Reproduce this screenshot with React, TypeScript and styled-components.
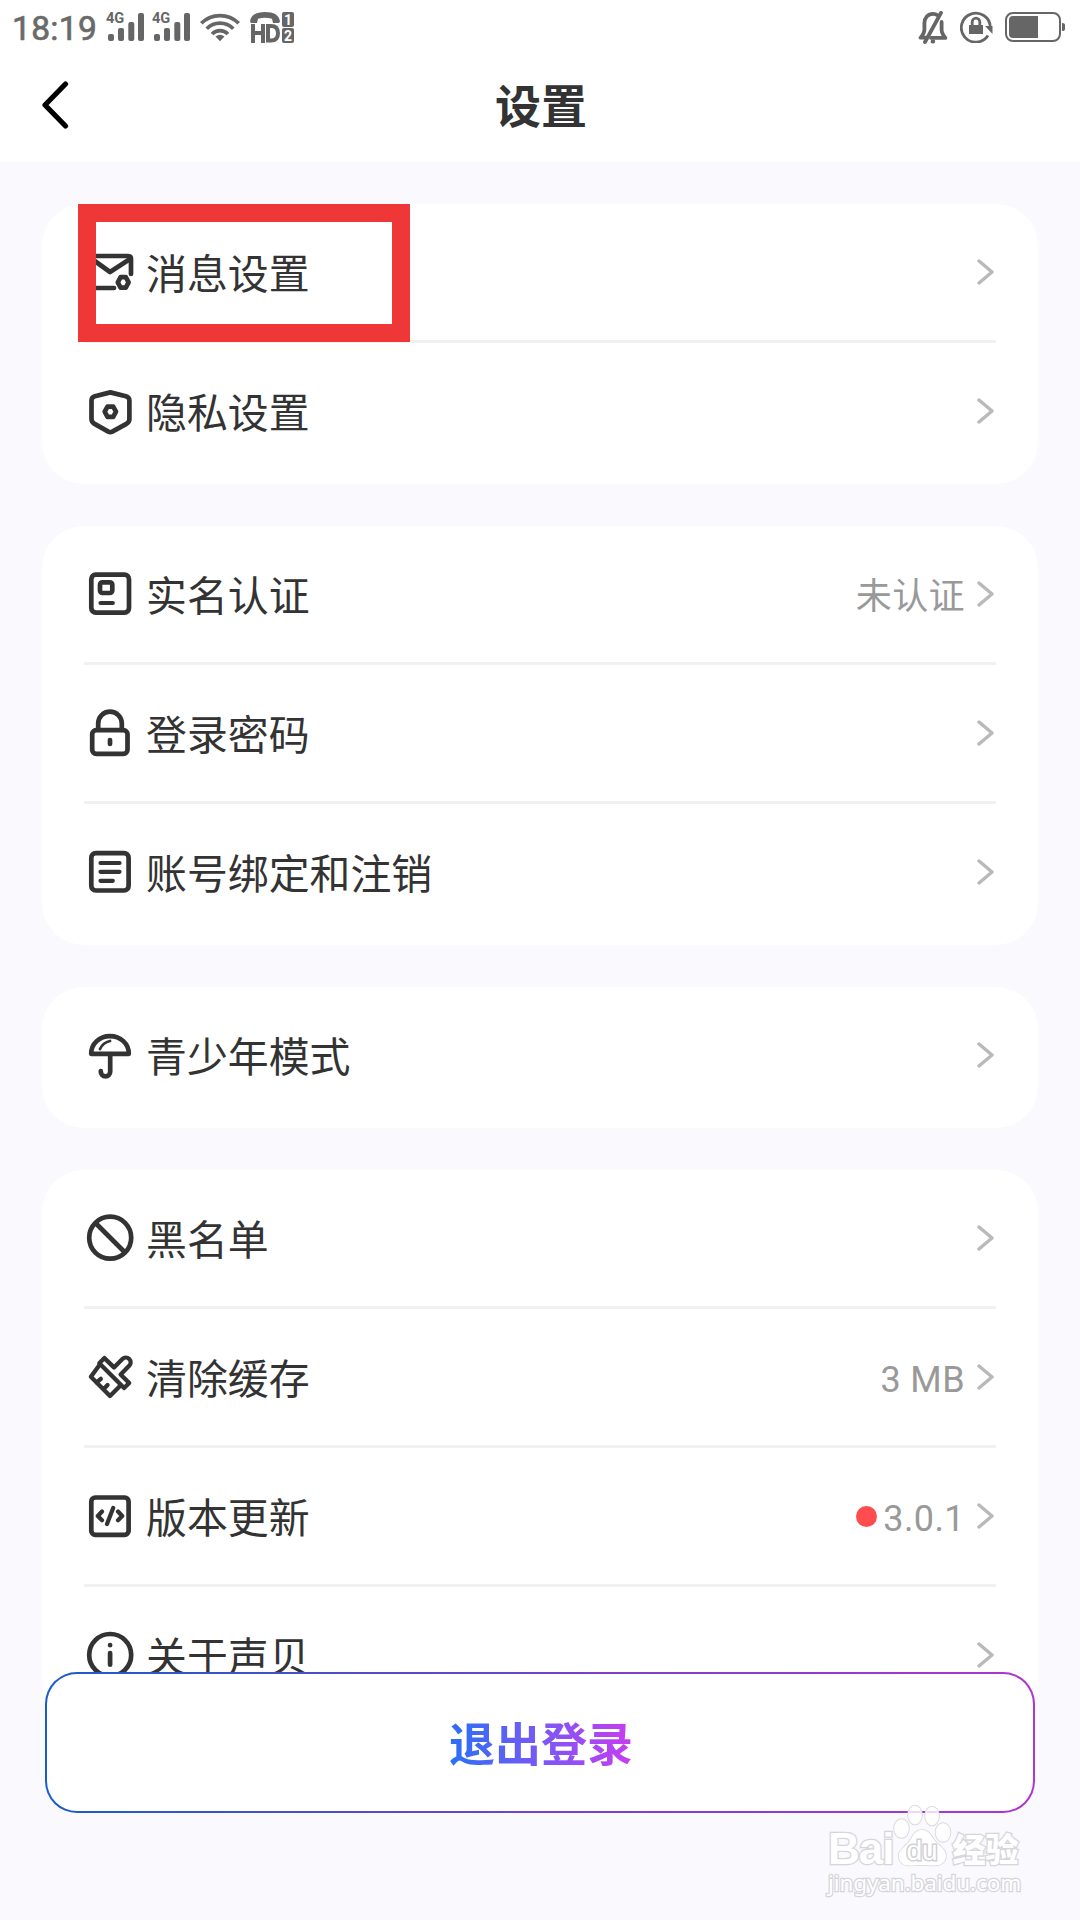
import React from "react";
import styled, { createGlobalStyle } from "styled-components";

const GlobalStyle = createGlobalStyle`
  * { box-sizing: border-box; }
  body { margin: 0; background: #faf9fe; }
`;

const Screen = styled.div`
  position: relative;
  display: flex;
  flex-direction: column;
  width: 1080px;
  height: 1920px;
  overflow: hidden;
  background: #faf9fe;
  color: #333;
  font-family: Roboto, "Noto Sans CJK SC", sans-serif;
`;

const TopArea = styled.header`
  height: 162px;
  flex: none;
  background: #fff;
`;

const StatusBar = styled.div`
  display: flex;
  justify-content: space-between;
  align-items: center;
  height: 54px;
  padding: 0 15px 0 12px;
  color: #6a6a6a;
`;

const StatusGroup = styled.div<{ $gap: number }>`
  display: flex;
  align-items: center;
  gap: ${(p) => p.$gap}px;
`;

const SignalPair = styled.div`
  display: flex;
  gap: 7px;
  margin-right: 1px;
`;

const Clock = styled.span`
  width: 86px;
  font-size: 33.5px;
  line-height: 40px;
  font-weight: 400;
  letter-spacing: 0.35px;
  -webkit-text-stroke: 0.7px #6a6a6a;
  white-space: nowrap;
  padding-top: 3px;
`;

const TitleBar = styled.div`
  display: grid;
  grid-template-columns: 100px 1fr 100px;
  align-items: center;
  height: 102px;
`;

const BackButton = styled.button`
  display: flex;
  padding: 0 0 0 42px;
  border: 0;
  background: none;
`;

const Title = styled.h1`
  margin: 0;
  padding: 3px 0 0 2px;
  text-align: center;
  font-size: 46px;
  line-height: 60px;
  font-weight: 700;
  color: #333;
`;

const List = styled.main`
  display: flex;
  flex-direction: column;
  gap: 42px;
  padding: 42px;
`;

const Card = styled.section`
  position: relative;
  flex: none;
  padding: 0 42px 5px;
  border-radius: 42px;
  background: #fff;
`;

const Row = styled.div`
  display: flex;
  align-items: center;
  height: 136px;
  padding: 0 2px;

  & + & {
    height: 139px;
    border-top: 3px solid #f1f1f1;
  }
`;

const RowIcon = styled.svg`
  flex: none;
  width: 48px;
  height: 48px;
  fill: none;
  stroke: #333;
  stroke-width: 4.7;
  stroke-linecap: round;
  stroke-linejoin: round;
`;

const Label = styled.span`
  flex: 1;
  margin-left: 12px;
  padding-top: 6px;
  font-size: 40.9px;
  line-height: 56px;
`;

const Value = styled.span`
  margin-right: 12px;
  padding-top: 6px;
  font-size: 36px;
  line-height: 50px;
  letter-spacing: 0.4px;
  color: #999;
`;

const Dot = styled.span`
  width: 21px;
  height: 21px;
  margin-right: 6px;
  border-radius: 50%;
  background: #ff4d4f;
`;

const Highlight = styled.div`
  position: absolute;
  left: 36px;
  top: 0;
  width: 332px;
  height: 138px;
  border: 18px solid #ef3737;
`;

const Logout = styled.button`
  position: absolute;
  left: 45px;
  top: 1672px;
  width: 990px;
  height: 141px;
  padding: 5px 0 0 2px;
  border: 2px solid transparent;
  border-radius: 32px;
  background: linear-gradient(#fff, #fff) padding-box,
    linear-gradient(90deg, #1a5ccb, #7a40c8 55%, #ae35d0) border-box;
  font-family: inherit;
`;

const LogoutText = styled.span`
  font-size: 46px;
  line-height: 60px;
  font-weight: 700;
  background: linear-gradient(90deg, #2870f5, #7a58f5 50%, #c83cf0);
  background-clip: text;
  -webkit-background-clip: text;
  color: transparent;
`;

const Watermark = styled.div`
  position: absolute;
  left: 828px;
  top: 1804px;
  width: 200px;
  color: #fff;
  -webkit-text-stroke: 2.6px #d6d6da;
  paint-order: stroke fill;
`;

const WatermarkLogo = styled.div`
  display: flex;
  align-items: flex-end;
  height: 64px;
`;

const WatermarkWord = styled.span<{ $size: number; $spacing: number; $cjk?: boolean }>`
  font-family: ${(p) => (p.$cjk ? '"Noto Sans CJK SC"' : '"Liberation Sans"')}, sans-serif;
  font-size: ${(p) => p.$size}px;
  line-height: ${(p) => (p.$cjk ? 40 : 38)}px;
  font-weight: ${(p) => (p.$cjk ? 900 : 700)};
  letter-spacing: ${(p) => p.$spacing}px;
`;

const WatermarkUrl = styled.div`
  font-family: "Noto Sans", sans-serif;
  font-size: 22.5px;
  line-height: 30px;
  letter-spacing: -0.1px;
`;

const Chevron = () => (
  <svg width="17" height="26" viewBox="0 0 17 26" fill="none" stroke="#b9b9b9" strokeWidth="3.4" strokeLinecap="round" strokeLinejoin="round">
    <path d="M2 2l13 11L2 24" />
  </svg>
);

const icons: Record<string, React.ReactNode> = {
  mail: (
    <>
      <path d="M28 40H8q-3 0-3-3V11q0-3 3-3h34q3 0 3 3v15" />
      <path d="M6 11l18 13 20-13" />
      <path d="M34.6 29.2h5.2l2.8 5.2-2.8 5.3h-5.2l-2.8-5.3z" />
    </>
  ),
  shield: (
    <>
      <path d="M24.3 5.4l15.6 3.9q3.5 1 3.5 4.3V32q0 3-2.6 4.6l-14.5 8q-2 1-4 0l-14.2-8Q5.5 35 5.5 32V13.6q0-3.4 3.4-4.3z" />
      <path d="M18.7 24.7l2.8-5.1h5.7l2.8 5.1-2.8 5.1h-5.7z" />
    </>
  ),
  idCard: (
    <>
      <rect x="5.3" y="4.7" width="37.7" height="37.9" rx="4.5" />
      <rect x="14" y="12.3" width="12.3" height="10.7" rx="2.5" />
      <path d="M14.5 33h12.3" strokeWidth="4.2" />
    </>
  ),
  lock: (
    <>
      <rect x="6.2" y="21.2" width="35.3" height="23.6" rx="4" />
      <path d="M12.2 21v-6.5a11.8 11.8 0 0 1 23.6 0V21M24 31v4" />
    </>
  ),
  list: (
    <>
      <rect x="5.3" y="5.2" width="37.3" height="37.3" rx="4.5" />
      <path d="M14.5 15h19M14.5 23.8h19M14.5 32.8h12.3" strokeWidth="4.2" />
    </>
  ),
  umbrella: (
    <>
      <path d="M5.2 22.8C5.2 12.5 13.5 5.2 24 5.2s18.8 7.3 18.8 17.6z" />
      <path d="M14 18q3-6.5 10-8" strokeWidth="2.8" />
      <path d="M24.2 23v17.7a4.7 4.7 0 0 1-9.4 0v-.5" />
    </>
  ),
  ban: <path d="M45.2 23.7a21 21 0 1 1-42 0 21 21 0 0 1 42 0zM9.5 9l29.5 29.5" />,
  brush: (
    <>
      <path d="M18.4 5.1L28 14.4l8.4-8.4a4.7 4.7 0 0 1 6.8 6.8L34.6 21.4l8.6 8.6-5.1 5.1L13.3 10.2z" strokeWidth="4.3" />
      <path d="M13.3 12.3L4.9 23.8 24 43l10.5-10.5M14.8 25.8l-4.3 3.8M21.6 32l-4.2 4.2" strokeWidth="4.3" />
    </>
  ),
  code: (
    <>
      <rect x="5.3" y="5.5" width="37.3" height="37.3" rx="4" />
      <path d="M16 19.5L11.8 24l4.2 4.2M27.2 16l-6.2 16M32 19.5l4.2 4.5-4.2 4.2" strokeWidth="4.2" />
    </>
  ),
  info: <path d="M45.2 24a21 21 0 1 1-42 0 21 21 0 0 1 42 0zM24.1 14v.2M24.1 22v11.7" />,
};

const Signal = () => (
  <svg width="39" height="38" viewBox="0 -4 39 38" fill="#666">
    <text x="0" y="11.4" fontSize="14.6" fontWeight="700" fontFamily="Roboto, sans-serif">4G</text>
    <rect x="2" y="22" width="6" height="7" rx="2" />
    <rect x="12" y="16" width="6" height="13" rx="2" />
    <rect x="22.3" y="10" width="6" height="19" rx="2" />
    <rect x="32" y="1" width="6" height="28" rx="2" />
  </svg>
);

const Wifi = () => (
  <svg width="40" height="29" viewBox="0 0 40 29" fill="none" stroke="#666" strokeWidth="3.7">
    <path d="M1.3 10.3a26.5 26.5 0 0 1 37.4 0M6.7 15.7a18.8 18.8 0 0 1 26.6 0M12 21a11.3 11.3 0 0 1 16 0" />
    <path d="M15.5 23.4q4.5-3.5 9 0L20 28.3z" fill="#666" stroke="none" />
  </svg>
);

const HdCall = () => (
  <svg width="46" height="31" viewBox="-2 0 46 31" fill="#666">
    <path d="M0 9.5C1 3 6 0 15 0s14 3 15 9.5L29 11h-6l-1-4.3q-7-1.8-14 0L7 11H1z" />
    <path d="M3 12v19M13 12v19M3 21h10M18 14h3q7 0 7 7.3t-7 7.3h-3z" fill="none" stroke="#666" strokeWidth="4" />
    <rect x="32" y="0" width="12" height="15" rx="2" />
    <rect x="32" y="16" width="12" height="15" rx="2" />
    <g fill="#fff" fontSize="14" fontWeight="700" fontFamily="Roboto, sans-serif" textAnchor="middle">
      <text x="38" y="12.5">1</text>
      <text x="38" y="28.5">2</text>
    </g>
  </svg>
);

const MutedBell = () => (
  <svg width="30" height="33" viewBox="0 0 30 33" fill="none" stroke="#666" strokeWidth="3.8" strokeLinecap="round">
    <path d="M20 4.6Q17.7 2.8 15 2.8c-5 0-8.6 4-8.6 9.2v6.5c0 3-1.4 5.4-3.8 8.2h5M13 26.9h14.4c-2.4-2.8-3.8-5.2-3.8-8.2V11" strokeLinejoin="round" />
    <path d="M23 1.8L7 31M14.5 30.5h.8" />
  </svg>
);

const RotationLock = () => (
  <svg width="33" height="32" viewBox="0 0 33 32" fill="none" stroke="#666" strokeWidth="2.8">
    <path d="M28 24.5A14.5 14.5 0 1 1 30.3 16" />
    <path d="M25 15h7.5v8z" fill="#666" stroke="none" />
    <rect x="9" y="14" width="14" height="9" fill="#666" stroke="none" />
    <path d="M12.2 14.5V11a3.8 3.8 0 0 1 7.6 0v3.5" />
  </svg>
);

const Battery = () => (
  <svg width="60" height="30" viewBox="0 0 60 30" fill="#666">
    <rect x="1" y="1" width="54" height="28" rx="7" fill="none" stroke="#666" strokeWidth="2" />
    <path d="M33 4v22H8q-4 0-4-4V8q0-4 4-4z" />
    <path d="M57 11q3 0 3 2v4q0 2-3 2z" />
  </svg>
);

const Paw = () => (
  <svg width="59" height="64" viewBox="0 0 59 64" fill="#fff" stroke="#d6d6da" strokeWidth="1.5">
    <ellipse cx="8.5" cy="24.5" rx="7.5" ry="9.5" fillOpacity="0.8" />
    <ellipse cx="22" cy="11" rx="7" ry="9.5" fillOpacity="0.8" />
    <ellipse cx="39" cy="12" rx="7" ry="9.5" fillOpacity="0.8" />
    <ellipse cx="50" cy="28.5" rx="7.5" ry="9.5" fillOpacity="0.8" />
    <path d="M29 26c8 0 9 7 15 13 7 6 11 10 8 17-4 8-14 5-23 5s-18 3-22-4c-4-8 2-12 8-18 5-6 6-13 14-13z" />
    <text x="29" y="56" fontSize="28" textAnchor="middle" fontWeight="400" fontFamily="Liberation Sans, sans-serif" stroke="#cfcfd4" strokeWidth="3">du</text>
  </svg>
);

type Item = { icon: string; label: string; value?: string; dot?: boolean };

const groups: { items: Item[]; highlighted?: boolean }[] = [
  {
    highlighted: true,
    items: [
      { icon: "mail", label: "消息设置" },
      { icon: "shield", label: "隐私设置" },
    ],
  },
  {
    items: [
      { icon: "idCard", label: "实名认证", value: "未认证" },
      { icon: "lock", label: "登录密码" },
      { icon: "list", label: "账号绑定和注销" },
    ],
  },
  { items: [{ icon: "umbrella", label: "青少年模式" }] },
  {
    items: [
      { icon: "ban", label: "黑名单" },
      { icon: "brush", label: "清除缓存", value: "3 MB" },
      { icon: "code", label: "版本更新", value: "3.0.1", dot: true },
      { icon: "info", label: "关于声贝" },
    ],
  },
];

export default function App() {
  return (
    <Screen>
      <GlobalStyle />
      <TopArea>
        <StatusBar>
          <StatusGroup $gap={8}>
            <Clock>18:19</Clock>
            <SignalPair>
              <Signal />
              <Signal />
            </SignalPair>
            <Wifi />
            <HdCall />
          </StatusGroup>
          <StatusGroup $gap={12}>
            <MutedBell />
            <RotationLock />
            <Battery />
          </StatusGroup>
        </StatusBar>
        <TitleBar>
          <BackButton aria-label="返回">
            <svg width="27" height="48" viewBox="0 0 27 48" fill="none" stroke="#000" strokeWidth="5.2" strokeLinecap="round" strokeLinejoin="round">
              <path d="M23.5 3L3 24l20.5 21" />
            </svg>
          </BackButton>
          <Title>设置</Title>
        </TitleBar>
      </TopArea>
      <List>
        {groups.map((group, i) => (
          <Card key={i}>
            {group.items.map((item) => (
              <Row key={item.label}>
                <RowIcon viewBox="0 0 48 48">{icons[item.icon]}</RowIcon>
                <Label>{item.label}</Label>
                {item.dot && <Dot />}
                {item.value && <Value>{item.value}</Value>}
                <Chevron />
              </Row>
            ))}
            {group.highlighted && <Highlight />}
          </Card>
        ))}
      </List>
      <Logout>
        <LogoutText>退出登录</LogoutText>
      </Logout>
      <Watermark>
        <WatermarkLogo>
          <WatermarkWord $size={44} $spacing={-1}>Bai</WatermarkWord>
          <Paw />
          <WatermarkWord $size={33} $spacing={0} $cjk>经验</WatermarkWord>
        </WatermarkLogo>
        <WatermarkUrl>jingyan.baidu.com</WatermarkUrl>
      </Watermark>
    </Screen>
  );
}
